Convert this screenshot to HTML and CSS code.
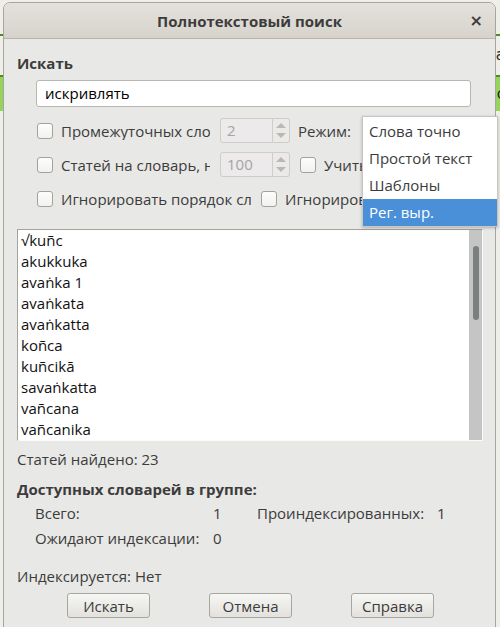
FILE: index.html
```html
<!DOCTYPE html>
<html lang="ru">
<head>
<meta charset="utf-8">
<title>Полнотекстовый поиск</title>
<link rel="stylesheet" href="styles.css">
</head>
<body>
<div class="desk">
  <div class="strip strip-line l1"></div>
  <div class="strip strip-line l2"></div>
  <div class="strip strip-fill f1"><span class="ghost-l">I</span><span class="ghost-r">c</span></div>
  <span class="ghost-a">a</span>
</div>

<div class="window">
  <div class="titlebar">
    <span class="title">Полнотекстовый поиск</span>
    <span class="close">×</span>
  </div>

  <div class="content">
    <div class="heading">Искать</div>
    <div class="input">искривлять</div>

    <div class="options">
      <div class="row">
        <span class="check"></span>
        <span class="lbl clip">Промежуточных слов</span>
        <span class="spin"><span class="spin-field">2</span><span class="spin-arrows"><span class="up"></span><span class="down"></span></span></span>
        <span class="lbl mode">Режим:</span>
      </div>
      <div class="row">
        <span class="check"></span>
        <span class="lbl clip">Статей на словарь, не более</span>
        <span class="spin"><span class="spin-field">100</span><span class="spin-arrows"><span class="up"></span><span class="down"></span></span></span>
        <span class="check check-2"></span>
        <span class="lbl">Учитывать диакритику</span>
      </div>
      <div class="row">
        <span class="check"></span>
        <span class="lbl clip wide">Игнорировать порядок слов</span>
        <span class="check check-3"></span>
        <span class="lbl">Игнорировать диакритику</span>
      </div>
    </div>

    <div class="list">
      <ul class="items">
        <li>√kuñc</li>
        <li>akukkuka</li>
        <li>avaṅka 1</li>
        <li>avaṅkata</li>
        <li>avaṅkatta</li>
        <li>koñca</li>
        <li>kuñcikā</li>
        <li>savaṅkatta</li>
        <li>vañcana</li>
        <li>vañcanika</li>
      </ul>
      <div class="scrollbar"><div class="thumb"></div></div>
    </div>

    <div class="found">Статей найдено: 23</div>
    <div class="heading2">Доступных словарей в группе:</div>
    <div class="stats">
      <span>Всего:</span><span>1</span><span>Проиндексированных:</span><span>1</span>
      <span>Ожидают индексации:</span><span>0</span><span></span><span></span>
    </div>
    <div class="indexing">Индексируется: Нет</div>

    <div class="buttons">
      <button class="btn">Искать</button>
      <button class="btn">Отмена</button>
      <button class="btn">Справка</button>
    </div>
  </div>

  <div class="popup">
    <div class="pitem">Слова точно</div>
    <div class="pitem">Простой текст</div>
    <div class="pitem">Шаблоны</div>
    <div class="pitem sel">Рег. выр.</div>
  </div>
</div>
</body>
</html>
```
FILE: styles.css
```css
html, body {
  margin: 0;
  padding: 0;
}
body {
  width: 500px;
  height: 627px;
  overflow: hidden;
  position: relative;
  background: #efeee8;
  font-family: "Open Sans", "Noto Sans", sans-serif;
  font-size: 15px;
  color: #3c3c3c;
}

/* background application peeking out behind the dialog */
.desk {
  position: absolute;
  inset: 0;
}
.strip {
  position: absolute;
  left: 0;
  right: 0;
}
.strip-line { height: 2px; background: #4f8a23; }
.l1 { top: 34px; }
.l2 { top: 75px; }
.f1 {
  top: 77px;
  height: 34px;
  background: #94d45b;
  font-family: "DejaVu Sans", sans-serif;
  font-size: 15px;
  color: #222;
}
.ghost-l { position: absolute; left: -4px; top: 8px; }
.ghost-r { position: absolute; right: -5px; top: 8px; }
.ghost-a {
  position: absolute;
  right: -5px;
  top: 46px;
  font-family: "DejaVu Sans", sans-serif;
  font-size: 15px;
  color: #222;
}

/* dialog window */
.window {
  position: absolute;
  left: 3px;
  top: 2px;
  width: 491px;
  height: 660px;
  background: #e8e8e6;
  border: 1px solid #a7a59f;
  border-radius: 7px 7px 0 0;
}
.titlebar {
  height: 35px;
  border-bottom: 1px solid #b9b5ad;
  border-radius: 6px 6px 0 0;
  background: linear-gradient(#e4e1dc, #d7d3cc);
  display: flex;
  align-items: center;
  justify-content: center;
  position: relative;
}
.title {
  font-weight: bold;
  font-size: 15px;
  color: #3c3c3c;
}
.close {
  position: absolute;
  right: 12px;
  top: 8px;
  font-size: 16px;
  line-height: 20px;
  font-weight: bold;
  color: #3c3c3c;
  font-family: "DejaVu Sans", sans-serif;
}

.content {
  padding: 15px 13px 0 13px;
}
.heading, .heading2 {
  font-weight: bold;
  line-height: 18px;
  height: 18px;
}
.input {
  margin: 8px 0 0 19px;
  width: 425px;
  height: 25px;
  line-height: 25px;
  padding-left: 8px;
  background: #fff;
  border: 1px solid #b8b6b0;
  border-radius: 3px;
  color: #000;
  font-size: 15px;
}

.options {
  margin: 11px 0 0 20px;
  display: flex;
  flex-direction: column;
  gap: 9px;
}
.row {
  height: 25px;
  display: flex;
  align-items: center;
  white-space: nowrap;
}
.check {
  flex: none;
  width: 14px;
  height: 14px;
  border: 1px solid #a4a29c;
  border-radius: 3px;
  background: linear-gradient(#fdfdfc, #f1f1ef);
  margin-right: 8px;
}
.lbl { line-height: 18px; }
.clip {
  width: 149px;
  overflow: hidden;
  flex: none;
}
.clip.wide { width: 190px; }
.check-2 { margin-left: 10px; }
.check-3 { margin-left: 10px; }
.mode { margin-left: 8px; }

.spin {
  flex: none;
  margin-left: 10px;
  width: 70px;
  height: 25px;
  display: flex;
}
.spin-field {
  flex: none;
  width: 45px;
  height: 23px;
  line-height: 23px;
  padding-left: 6px;
  border: 1px solid #cfcdc8;
  border-radius: 3px 0 0 3px;
  background: #eceaea;
  color: #a4a4a2;
  font-size: 15px;
}
.spin-arrows {
  flex: none;
  width: 16px;
  height: 23px;
  border: 1px solid #cfcdc8;
  border-left: none;
  border-radius: 0 3px 3px 0;
  background: #eceae8;
  display: flex;
  flex-direction: column;
  align-items: center;
  justify-content: center;
  gap: 5px;
}
.up, .down {
  width: 0;
  height: 0;
  border-left: 5px solid transparent;
  border-right: 5px solid transparent;
}
.up { border-bottom: 5px solid #b9b8b5; }
.down { border-top: 5px solid #b9b8b5; }

.list {
  margin-top: 18px;
  width: 464px;
  height: 210px;
  border-top: 1px solid #a3a29f;
  border-left: 1px solid #a3a29f;
  border-right: 1px solid #fafafa;
  border-bottom: 1px solid #fafafa;
  background: #fff;
  display: flex;
}
.items {
  list-style: none;
  margin: 0;
  padding: 0 0 0 3px;
  flex: 1;
  color: #111;
  font-size: 15px;
}
.items li {
  height: 21px;
  line-height: 21px;
}
.scrollbar {
  width: 13px;
  background: #c4c5c4;
  position: relative;
  flex: none;
}
.thumb {
  position: absolute;
  left: 4px;
  top: 16px;
  width: 6px;
  height: 74px;
  border-radius: 3px;
  background: #7c7f7f;
}

.found {
  margin-top: 9px;
  line-height: 18px;
}
.heading2 { margin-top: 12px; }
.stats {
  margin: 6px 0 0 18px;
  display: grid;
  grid-template-columns: 178px 44px 180px auto;
  row-gap: 7px;
  line-height: 18px;
}
.indexing {
  margin-top: 20px;
  line-height: 18px;
}
.buttons {
  margin: 8px 0 0 50px;
  display: flex;
  gap: 59px;
}
.btn {
  width: 83px;
  height: 25px;
  padding: 0;
  font: inherit;
  color: #3c3c3c;
  border: 1px solid #a8a6a0;
  border-radius: 3px;
  background: linear-gradient(#f6f6f4, #e2e1dd);
}

/* open combo box popup */
.popup {
  position: absolute;
  left: 358px;
  top: 113px;
  width: 134px;
  padding: 1px 0 0 0;
  background: #fff;
  border: 1px solid #c7c6c2;
  box-shadow: 0 1px 3px rgba(0,0,0,0.25);
}
.pitem {
  height: 27px;
  line-height: 27px;
  padding-left: 6px;
  color: #3c3c3c;
  font-size: 15px;
}
.pitem.sel {
  background: #4a90d9;
  color: #fff;
}
```
